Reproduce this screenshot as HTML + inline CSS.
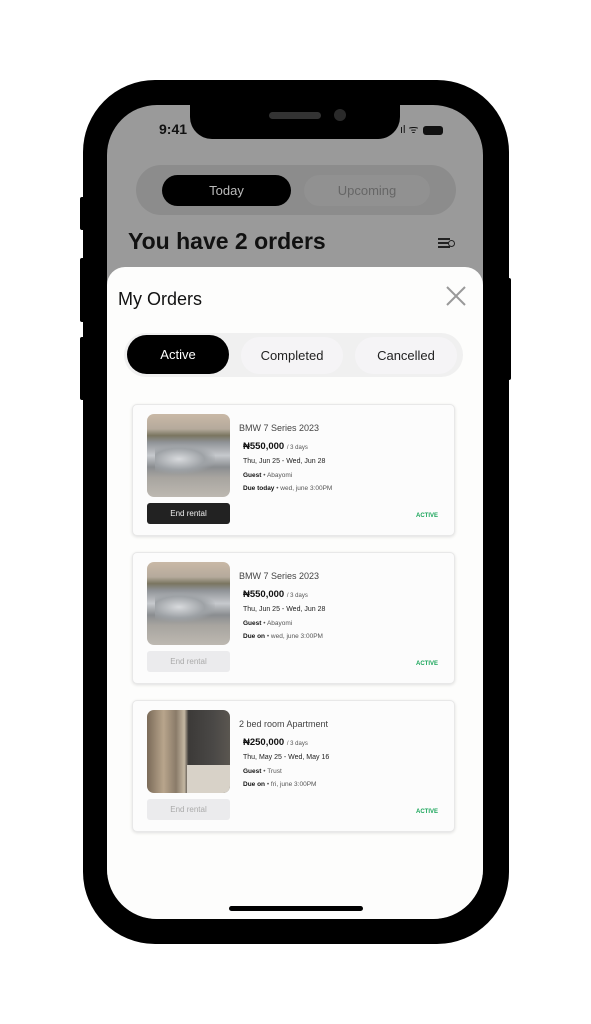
<!DOCTYPE html><html><head><meta charset="utf-8"><style>
*{margin:0;padding:0;box-sizing:border-box}
body{width:591px;height:1024px;background:#fff;position:relative;overflow:hidden;font-family:"Liberation Sans",sans-serif}
.a{position:absolute}
.phone{left:83px;top:80px;width:426px;height:864px;background:#000;border-radius:72px}
.screen{left:107px;top:105px;width:376px;height:814px;background:#9a9a9a;border-radius:50px;overflow:hidden}
.btn{background:#000;border-radius:2px}
.sheet{left:0;top:162px;width:376px;height:660px;background:#fdfdfc;border-radius:18px 18px 0 0}
.card{left:25px;width:323px;height:132px;background:#fcfcfc;border:1px solid #e8e8e8;border-radius:5px;box-shadow:0 1px 3px rgba(0,0,0,.12)}
.img{left:14px;top:9px;width:83px;height:83px;border-radius:7px;overflow:hidden}
.car{background:linear-gradient(180deg,#c9b9a6 0%,#b5aa9c 18%,#7a7560 26%,#8f9296 34%,#c6c9cd 50%,#8a8d90 64%,#a7a49f 76%,#bdb8b1 100%)}
.car:after{content:"";position:absolute;left:8px;top:30px;width:60px;height:30px;background:radial-gradient(ellipse at 40% 50%,#d8dadd 0%,#9ea2a6 50%,transparent 75%)}
.room{background:linear-gradient(90deg,#7a6a58 0%,#b8a58c 20%,#8a7b69 35%,#c4b7a2 45%,#3c3a38 50%,#4a4846 80%,#5a5650 100%)}
.room:after{content:"";position:absolute;left:40px;top:55px;width:43px;height:28px;background:#d8d2c8}
.eb{left:14px;top:98px;width:83px;height:21px;border-radius:3px;font-size:8px;text-align:center;line-height:21px}
.t1{left:106px;top:18px;font-size:9px;color:#444}
.t2{left:110px;top:36px;font-size:9.5px;font-weight:bold;color:#111}
.t2 span{font-size:6px;font-weight:normal;color:#555}
.t3{left:110px;top:53px;font-size:7px;color:#222}
.t4{left:110px;top:67px;font-size:6.5px;color:#555}
.t5{left:110px;top:80px;font-size:6.5px;color:#555}
b{color:#111}
.act{left:283px;top:108px;font-size:6px;font-weight:bold;color:#1aa55a}
</style></head><body>
<div class="a btn" style="left:80px;top:197px;width:5px;height:33px"></div>
<div class="a btn" style="left:80px;top:258px;width:5px;height:64px"></div>
<div class="a btn" style="left:80px;top:337px;width:5px;height:63px"></div>
<div class="a btn" style="left:506px;top:278px;width:5px;height:102px"></div>
<div class="a phone"></div>
<div class="a screen">
 <div class="a" style="left:83px;top:-2px;width:210px;height:36px;background:#000;border-radius:0 0 22px 22px"></div>
 <div class="a" style="left:162px;top:7px;width:52px;height:7px;background:#333;border-radius:4px"></div>
 <div class="a" style="left:227px;top:4px;width:12px;height:12px;background:#2a2a2a;border-radius:50%"></div>
 <div class="a" style="left:52px;top:16px;font-size:14px;font-weight:bold;color:#111">9:41</div>
 <div class="a" style="left:293px;top:17px;font-size:11px;color:#111">ıl ᯤ</div>
 <div class="a" style="left:316px;top:21px;width:20px;height:9px;background:#111;border-radius:3px"></div>
 <div class="a" style="left:29px;top:60px;width:320px;height:50px;background:#8c8c8c;border-radius:25px"></div>
 <div class="a" style="left:55px;top:70px;width:129px;height:31px;background:#000;border-radius:16px;color:#bbb;font-size:13px;text-align:center;line-height:31px">Today</div>
 <div class="a" style="left:197px;top:70px;width:126px;height:31px;background:#919191;border-radius:16px;color:#666;font-size:13px;text-align:center;line-height:31px">Upcoming</div>
 <div class="a" style="left:21px;top:123px;font-size:23px;font-weight:bold;color:#111">You have 2 orders</div>
 <div class="a" style="left:331px;top:133px;width:12px;height:2px;background:#222;box-shadow:0 4px 0 #222,0 8px 0 #222"></div>
 <div class="a" style="left:341px;top:135px;width:7px;height:7px;border:1.5px solid #222;border-radius:50%;background:#9a9a9a"></div>
 <div class="a sheet">
  <div class="a" style="left:11px;top:22px;font-size:18px;color:#111">My Orders</div>
  <svg class="a" style="left:338px;top:18px" width="22" height="22"><path d="M2 2L20 20M20 2L2 20" stroke="#999" stroke-width="2"/></svg>
  <div class="a" style="left:17px;top:66px;width:339px;height:44px;background:#f0f0f0;border-radius:22px"></div>
  <div class="a" style="left:20px;top:68px;width:102px;height:39px;background:#000;border-radius:20px;color:#fff;font-size:13px;text-align:center;line-height:39px">Active</div>
  <div class="a" style="left:134px;top:70px;width:102px;height:37px;background:#f5f4f6;border-radius:19px;color:#222;font-size:13px;text-align:center;line-height:37px">Completed</div>
  <div class="a" style="left:248px;top:70px;width:102px;height:37px;background:#f5f4f6;border-radius:19px;color:#222;font-size:13px;text-align:center;line-height:37px">Cancelled</div>

  <div class="a card" style="top:137px">
   <div class="a img car"></div><div class="a eb" style="background:#222;color:#eee">End rental</div>
   <div class="a t1">BMW 7 Series 2023</div><div class="a t2">₦550,000 <span>/ 3 days</span></div>
   <div class="a t3">Thu, Jun 25 - Wed, Jun 28</div><div class="a t4"><b>Guest</b> • Abayomi</div>
   <div class="a t5"><b>Due today</b> • wed, june 3:00PM</div><div class="a act">ACTIVE</div>
  </div>
  <div class="a card" style="top:285px">
   <div class="a img car"></div><div class="a eb" style="background:#ebebed;color:#aaa">End rental</div>
   <div class="a t1">BMW 7 Series 2023</div><div class="a t2">₦550,000 <span>/ 3 days</span></div>
   <div class="a t3">Thu, Jun 25 - Wed, Jun 28</div><div class="a t4"><b>Guest</b> • Abayomi</div>
   <div class="a t5"><b>Due on</b> • wed, june 3:00PM</div><div class="a act">ACTIVE</div>
  </div>
  <div class="a card" style="top:433px">
   <div class="a img room"></div><div class="a eb" style="background:#ebebed;color:#aaa">End rental</div>
   <div class="a t1">2 bed room Apartment</div><div class="a t2">₦250,000 <span>/ 3 days</span></div>
   <div class="a t3">Thu, May 25 - Wed, May 16</div><div class="a t4"><b>Guest</b> • Trust</div>
   <div class="a t5"><b>Due on</b> • fri, june 3:00PM</div><div class="a act">ACTIVE</div>
  </div>
  <div class="a" style="left:122px;top:639px;width:134px;height:5px;background:#000;border-radius:3px"></div>
 </div>
</div>
</body></html>
